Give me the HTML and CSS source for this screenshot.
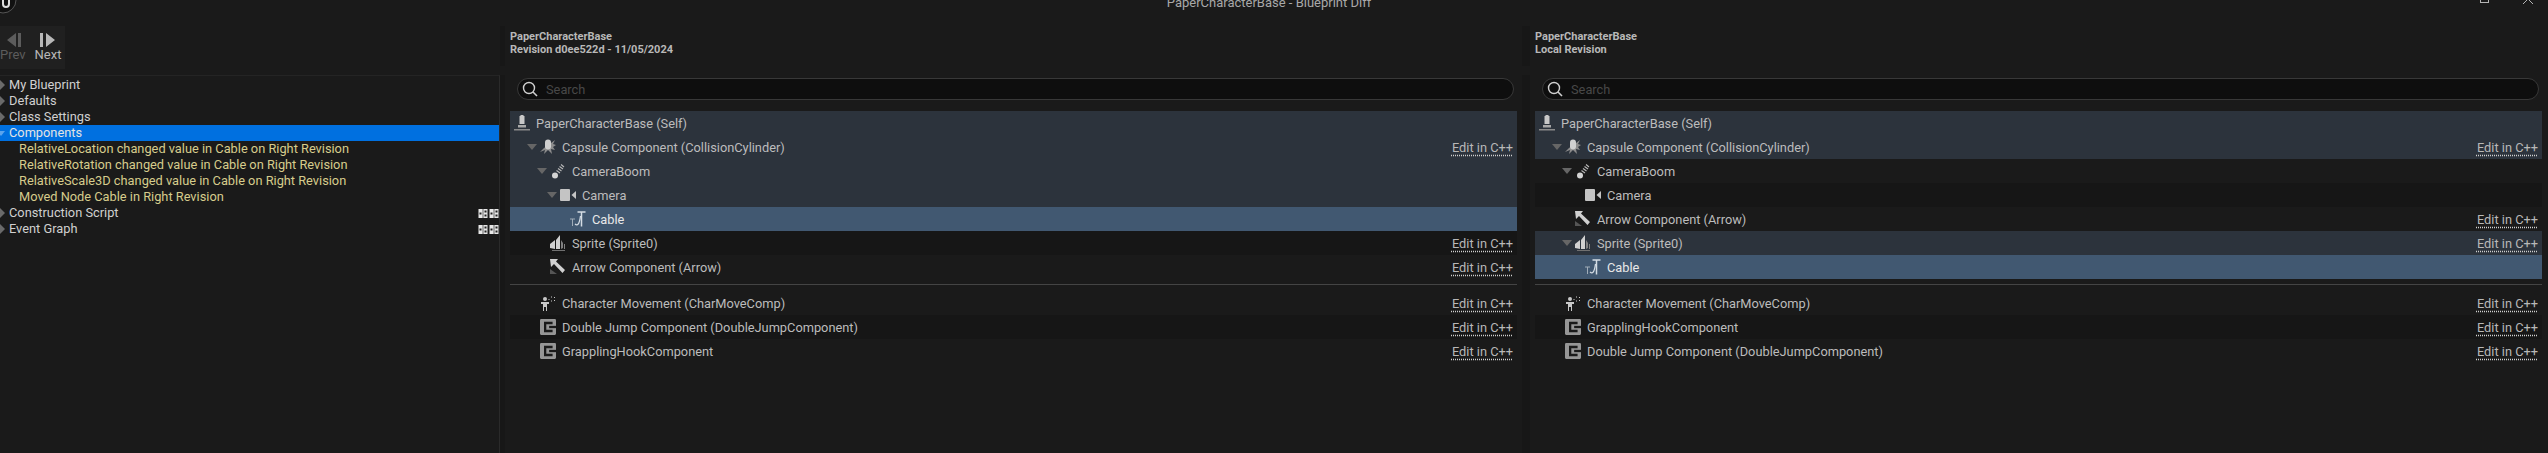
FILE: index.html

```html
<html lang="en">
<head>
  <meta charset="UTF-8">
  <title>PaperCharacterBase - Blueprint Diff</title>
  <link rel="stylesheet" href="styles.css">
</head>
<body>
  <svg class="defs" width="0" height="0">
    <symbol id="i-self" viewBox="0 0 16 16"><path d="M5.500 1.500 L7 0 L9 0 L10.500 1.500 L10.500 9 L5.500 9 Z" fill="#c8c8c8"/><path d="M4 10 L12 10 L12 12.500 L4 12.500 Z" fill="#a8a8a8"/><path d="M0 14 L16 14 L16 15.500 L0 15.500 Z" fill="#8a8a8a"/></symbol>
    <symbol id="i-capsule" viewBox="0 0 16 16"><path d="M11 4 L15 1 L13 5 L16 6 L13 8 L15 11 L11 10 L12 15 L8 11 L4 15 L5 11 L0 13 L4 9 Z" fill="#8c8c8c"/><rect x="5" y="0.500" width="6" height="10" rx="3" fill="#d0d0d0"/></symbol>
    <symbol id="i-boom" viewBox="0 0 16 16"><circle cx="5" cy="12.500" r="3" fill="#d4d4d4"/><path d="M6.500 7.500 L10 10 M8 5.500 L11.500 8 M9.500 3.500 L13 6 M11 1.500 L14 4" stroke="#b8b8b8" stroke-width="1.100" fill="none"/></symbol>
    <symbol id="i-camera" viewBox="0 0 16 12"><rect x="0" y="0" width="10" height="12" rx="1" fill="#c4c4c4"/><path d="M11.500 6 L16 2 L16 10 Z" fill="#c4c4c4"/></symbol>
    <symbol id="i-cable" viewBox="0 0 16 16"><path d="M7.500 1 L15.500 1 M11.500 1 L11.500 15.500" stroke="#d4dce4" stroke-width="1.500" fill="none"/><path d="M5 13 C8 15.500 9.500 12 10.500 5" stroke="#d4dce4" stroke-width="1.300" fill="none"/><path d="M0 8 L5 8 M2.500 8 L2.500 15" stroke="#a0acb8" stroke-width="1" fill="none"/></symbol>
    <symbol id="i-sprite" viewBox="0 0 16 16"><path d="M0 9 L5 5 L5 14 L0 13 Z M6 5 L10 0 L10 14 L6 14 Z" fill="#d0d0d0"/><path d="M11 5 L13 8 L13 13 L11 14 Z M14 9 L15 9 L15 14 L14 14 Z" fill="#808080"/><path d="M2 15.500 L15 15.500" stroke="#707070" stroke-width="1"/></symbol>
    <symbol id="i-arrow" viewBox="0 0 16 16"><path d="M0 0 L8 0 L6 2.500 L15 11 L12.500 14 L4 5 L1 8 Z" fill="#d0d0d0"/><path d="M0 10 L0 15 L7 15 Z" fill="#555"/></symbol>
    <symbol id="i-move" viewBox="0 0 16 16"><circle cx="5" cy="4" r="2" fill="#c8c8c8"/><path d="M1 7 L9 7 L9 9 L7 9 L7 16 L6 16 L6 12 L4 12 L4 16 L3 16 L3 9 L1 9 Z" fill="#c8c8c8"/><path d="M9 5 L9 4 M11 2 L12 2 M14 2 L15 3 M15 5 L14 6 M11 6 L12 6" stroke="#c8c8c8" stroke-width="1" fill="none"/></symbol>
    <symbol id="i-class" viewBox="0 0 14 14"><rect width="14" height="14" rx="1" fill="#969696"/><path d="M11 3.500 L4.500 3.500 L4.500 10.500 L11 10.500" stroke="#1a1a1a" stroke-width="2" fill="none"/><rect x="8" y="6" width="6" height="2" fill="#1a1a1a"/></symbol>
    <symbol id="i-graph" viewBox="0 0 9 9"><rect width="9" height="9" fill="#e8e8e8"/><rect x="1" y="3.500" width="2" height="2" fill="#222"/><rect x="6" y="1.500" width="2" height="2" fill="#222"/><rect x="6" y="5.500" width="2" height="2" fill="#222"/><path d="M4.500 0 L4.500 9" stroke="#666" stroke-width="1"/></symbol>
  </svg>

  <div class="title-bar">
    <svg class="ue-logo" width="17" height="14" viewBox="0 0 17 14"><circle cx="3" cy="0" r="13" fill="#111" stroke="#555" stroke-width="1"/><path d="M3 0 L3 4 Q3 7 6 7 Q9 7 9 4 L9 0" stroke="#ddd" stroke-width="2" fill="none"/></svg>
    <div class="title-text">PaperCharacterBase - Blueprint Diff</div>
    <div class="window-btns">
      <span class="win-max"></span>
      <svg width="10" height="4" viewBox="0 0 10 4"><path d="M0 4 L4 0 M6 0 L10 4" stroke="#b4b4b4" stroke-width="1"/></svg>
    </div>
  </div>

  <div class="main">
    <div class="diff-list">
      <div class="nav-row">
        <div class="nav-box">
          <div class="nav-btn nav-off">
            <svg width="16" height="14" viewBox="0 0 16 14"><path d="M11 0 L11 14 L2 7 Z M13 0 L16 0 L16 14 L13 14 Z" fill="currentColor"/></svg>
            <span>Prev</span>
          </div>
          <div class="nav-btn">
            <svg width="16" height="14" viewBox="0 0 16 14"><path d="M0 0 L3 0 L3 14 L0 14 Z M6 0 L15 7 L6 14 Z" fill="currentColor"/></svg>
            <span>Next</span>
          </div>
        </div>
      </div>
      <div class="diff-tree">
        <div class="diff-row"><i class="caret"></i>My Blueprint</div>
        <div class="diff-row"><i class="caret"></i>Defaults</div>
        <div class="diff-row"><i class="caret"></i>Class Settings</div>
        <div class="diff-row diff-active"><i class="caret caret-open"></i>Components</div>
        <div class="diff-row diff-change">RelativeLocation changed value in Cable on Right Revision</div>
        <div class="diff-row diff-change">RelativeRotation changed value in Cable on Right Revision</div>
        <div class="diff-row diff-change">RelativeScale3D changed value in Cable on Right Revision</div>
        <div class="diff-row diff-change">Moved Node Cable in Right Revision</div>
        <div class="diff-row"><i class="caret"></i>Construction Script<span class="graph-icons"><svg width="10" height="9"><use href="#i-graph"/></svg><svg width="10" height="9"><use href="#i-graph"/></svg></span></div>
        <div class="diff-row"><i class="caret"></i>Event Graph<span class="graph-icons"><svg width="10" height="9"><use href="#i-graph"/></svg><svg width="10" height="9"><use href="#i-graph"/></svg></span></div>
      </div>
    </div>

    <div class="splitter splitter-list"><div class="split-top"></div><div class="split-bottom"></div></div>

    <div class="revision">
      <div class="rev-head">
        <div>PaperCharacterBase</div>
        <div>Revision d0ee522d - 11/05/2024</div>
      </div>
      <div class="search">
        <svg width="16" height="16" viewBox="0 0 16 16"><circle cx="7" cy="7" r="5.500" stroke="#d0d0d0" stroke-width="1.400" fill="none"/><path d="M11 11 L15 15" stroke="#d0d0d0" stroke-width="1.600"/></svg>
        <span>Search</span>
      </div>
      <div class="comp-tree">
        <div class="comp-row row-blue depth-0"><svg class="icon"><use href="#i-self"/></svg><span>PaperCharacterBase (Self)</span></div>
        <div class="comp-row row-blue depth-1"><i class="exp"></i><svg class="icon"><use href="#i-capsule"/></svg><span>Capsule Component (CollisionCylinder)</span><a class="edit">Edit in C++</a></div>
        <div class="comp-row row-blue depth-2"><i class="exp"></i><svg class="icon"><use href="#i-boom"/></svg><span>CameraBoom</span></div>
        <div class="comp-row row-blue depth-3"><i class="exp"></i><svg class="icon"><use href="#i-camera"/></svg><span>Camera</span></div>
        <div class="comp-row row-sel depth-4"><svg class="icon"><use href="#i-cable"/></svg><span>Cable</span></div>
        <div class="comp-row row-alt depth-2"><svg class="icon"><use href="#i-sprite"/></svg><span>Sprite (Sprite0)</span><a class="edit">Edit in C++</a></div>
        <div class="comp-row depth-2"><svg class="icon"><use href="#i-arrow"/></svg><span>Arrow Component (Arrow)</span><a class="edit">Edit in C++</a></div>
        <div class="comp-sep"></div>
        <div class="comp-row depth-1"><svg class="icon"><use href="#i-move"/></svg><span>Character Movement (CharMoveComp)</span><a class="edit">Edit in C++</a></div>
        <div class="comp-row row-alt depth-1"><svg class="icon"><use href="#i-class"/></svg><span>Double Jump Component (DoubleJumpComponent)</span><a class="edit">Edit in C++</a></div>
        <div class="comp-row depth-1"><svg class="icon"><use href="#i-class"/></svg><span>GrapplingHookComponent</span><a class="edit">Edit in C++</a></div>
      </div>
    </div>

    <div class="splitter"><div class="split-top"></div><div class="split-bottom"></div></div>

    <div class="revision">
      <div class="rev-head">
        <div>PaperCharacterBase</div>
        <div>Local Revision</div>
      </div>
      <div class="search">
        <svg width="16" height="16" viewBox="0 0 16 16"><circle cx="7" cy="7" r="5.500" stroke="#d0d0d0" stroke-width="1.400" fill="none"/><path d="M11 11 L15 15" stroke="#d0d0d0" stroke-width="1.600"/></svg>
        <span>Search</span>
      </div>
      <div class="comp-tree">
        <div class="comp-row row-blue depth-0"><svg class="icon"><use href="#i-self"/></svg><span>PaperCharacterBase (Self)</span></div>
        <div class="comp-row row-blue depth-1"><i class="exp"></i><svg class="icon"><use href="#i-capsule"/></svg><span>Capsule Component (CollisionCylinder)</span><a class="edit">Edit in C++</a></div>
        <div class="comp-row depth-2"><i class="exp"></i><svg class="icon"><use href="#i-boom"/></svg><span>CameraBoom</span></div>
        <div class="comp-row row-alt depth-3"><svg class="icon"><use href="#i-camera"/></svg><span>Camera</span></div>
        <div class="comp-row depth-2"><svg class="icon"><use href="#i-arrow"/></svg><span>Arrow Component (Arrow)</span><a class="edit">Edit in C++</a></div>
        <div class="comp-row row-blue depth-2"><i class="exp"></i><svg class="icon"><use href="#i-sprite"/></svg><span>Sprite (Sprite0)</span><a class="edit">Edit in C++</a></div>
        <div class="comp-row row-sel depth-3"><svg class="icon"><use href="#i-cable"/></svg><span>Cable</span></div>
        <div class="comp-sep"></div>
        <div class="comp-row depth-1"><svg class="icon"><use href="#i-move"/></svg><span>Character Movement (CharMoveComp)</span><a class="edit">Edit in C++</a></div>
        <div class="comp-row row-alt depth-1"><svg class="icon"><use href="#i-class"/></svg><span>GrapplingHookComponent</span><a class="edit">Edit in C++</a></div>
        <div class="comp-row depth-1"><svg class="icon"><use href="#i-class"/></svg><span>Double Jump Component (DoubleJumpComponent)</span><a class="edit">Edit in C++</a></div>
      </div>
    </div>
  </div>
</body>
</html>
```

FILE: styles.css

```css
/* Blueprint diff window */
body {
  margin: 0;
  width: 2548px;
  height: 453px;
  overflow: hidden;
  background-color: #1a1a1a;
  font-family: Roboto, "Liberation Sans", sans-serif;
  font-size: 12.8px;
  color: #bcbcbc;
}

.defs {
  display: block;
  height: 0;
}

/* title bar, cut off by the top of the picture */
.title-bar {
  display: grid;
  grid-template-columns: 1fr auto 1fr;
  align-items: start;
  height: 33px;
  margin-top: -7px;
  overflow: hidden;
}

.ue-logo {
  margin-top: 7px;
}

.title-text {
  margin-right: 10px;
  padding-top: 3px;
  font-size: 13px;
  line-height: 14px;
  color: #a8a8a8;
}

.window-btns {
  display: flex;
  justify-self: end;
  gap: 34px;
  padding-right: 15px;
  margin-top: 7px;
}

.win-max {
  width: 7px;
  height: 2px;
  border: 1px solid #b4b4b4;
  border-top: 0;
}

/* main columns */
.main {
  display: flex;
  height: 427px;
}

.diff-list {
  width: 500px;
  flex: none;
}

.nav-row {
  height: 49px;
}

.nav-box {
  display: flex;
  gap: 9px;
  width: 65px;
  height: 43px;
  background-color: #202020;
}

.nav-btn {
  display: flex;
  flex-direction: column;
  align-items: center;
  padding-top: 7px;
  font-size: 13px;
  line-height: 16px;
  color: #b8b8b8;
}

.nav-off {
  color: #5c5c5c;
}

.diff-tree {
  width: 499px;
  height: 376px;
  padding-top: 1px;
  border-top: 1px solid #242424;
  border-right: 1px solid #2a2a2a;
}

.diff-row {
  display: flex;
  align-items: center;
  height: 16px;
  line-height: 16px;
  color: #d0d0d0;
  padding-left: 9px;
}

.diff-active {
  background-color: #0070e0;
  color: #e4e4e4;
}

.diff-change {
  padding-left: 19px;
  color: #d6cc8c;
}

.caret {
  width: 0;
  height: 0;
  margin-left: -9px;
  margin-right: 4px;
  border-left: 5px solid #6a6a6a;
  border-top: 5px solid transparent;
  border-bottom: 5px solid transparent;
}

.caret-open {
  border-left: 4px solid transparent;
  border-right: 4px solid transparent;
  border-top: 5px solid #5ca4ec;
  border-bottom: 0;
  margin-left: -12px;
  margin-right: 4px;
}

.graph-icons {
  display: flex;
  gap: 1px;
  margin-left: auto;
}

/* dark strips between the columns */
.splitter {
  flex: none;
  width: 8px;
  margin: 0 5px;
}

.splitter-list {
  width: 5px;
  margin: 0 5px 0 0;
}

.split-top {
  height: 40px;
  margin-bottom: 9px;
  background-color: #171717;
}

.split-bottom {
  height: 378px;
  background-color: #171717;
}

.revision {
  width: 1007px;
  flex: none;
}

.rev-head {
  height: 45px;
  font-size: 11px;
  font-weight: bold;
  line-height: 13px;
  color: #b8b8b8;
  padding-top: 4px;
  box-sizing: border-box;
}

.search {
  display: flex;
  align-items: center;
  gap: 8px;
  height: 22px;
  margin: 7px 3px 0 7px;
  padding-left: 4px;
  box-sizing: border-box;
  background-color: #0e0e0e;
  border: 1px solid #383838;
  border-radius: 11px;
  color: #484848;
}

.comp-tree {
  margin-top: 11px;
}

.comp-row {
  display: flex;
  align-items: center;
  height: 24px;
}

.comp-row span {
  margin-left: 6px;
}

.row-blue {
  background-color: #2c333c;
}

.row-sel {
  background-color: #415871;
  color: #e8e8e8;
}

.row-alt {
  background-color: #161616;
}

/* padding puts the icon; the expander hangs to the left of it */
.depth-0 { padding-left: 4px; }
.depth-1 { padding-left: 30px; }
.depth-2 { padding-left: 40px; }
.depth-3 { padding-left: 50px; }
.depth-4 { padding-left: 60px; }

.exp {
  width: 0;
  height: 0;
  margin-left: -13px;
  margin-right: 3px;
  border-left: 5px solid transparent;
  border-right: 5px solid transparent;
  border-top: 6px solid #666;
}

.icon {
  width: 16px;
  height: 16px;
  flex: none;
}

.edit {
  margin-left: auto;
  margin-right: 4px;
  color: #b8b8b8;
  text-decoration: underline dotted #d0d0d0;
  text-underline-offset: 3px;
}

.comp-sep {
  height: 1px;
  margin: 5px 0 6px;
  background-color: #444;
}
```
